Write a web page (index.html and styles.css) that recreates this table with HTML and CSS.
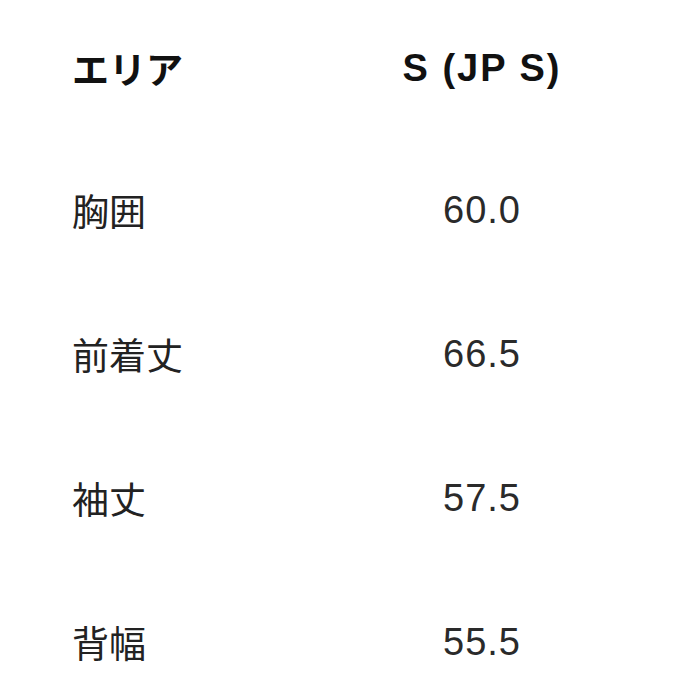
FILE: index.html
```html
<!DOCTYPE html>
<html lang="ja">
<head>
<meta charset="utf-8">
<link rel="stylesheet" href="styles.css">
</head>
<body>
<div class="table">
  <div class="row head"><div class="label">エリア</div><div class="val">S (JP S)</div></div>
  <div class="row"><div class="label">胸囲</div><div class="val">60.0</div></div>
  <div class="row"><div class="label">前着丈</div><div class="val">66.5</div></div>
  <div class="row"><div class="label">袖丈</div><div class="val">57.5</div></div>
  <div class="row last"><div class="label">背幅</div><div class="val">55.5</div></div>
</div>
</body>
</html>
```
FILE: styles.css
```css
html, body { margin: 0; padding: 0; background: #fff; }
body {
  width: 678px; height: 678px; overflow: hidden;
  font-family: "Liberation Sans", "Noto Sans CJK JP", sans-serif;
  color: #222;
}
.table { display: flex; flex-direction: column; padding-left: 72px; }
.row {
  display: grid;
  grid-template-columns: 260px 300px;
  align-items: center;
  height: 44px;
  line-height: 44px;
  padding: 50px 0;
}
.row.head { padding: 46px 0 48px; font-weight: bold; color: #111; }
.row.last { padding-bottom: 0; }
.label { font-family: "Noto Sans CJK JP", sans-serif; font-size: 37px; }
.head .label { font-weight: 700; }
.val { text-align: center; font-size: 38px; letter-spacing: 1px; color: #2a2a2a; }
.head .val { letter-spacing: 2px; color: #111; }
```
